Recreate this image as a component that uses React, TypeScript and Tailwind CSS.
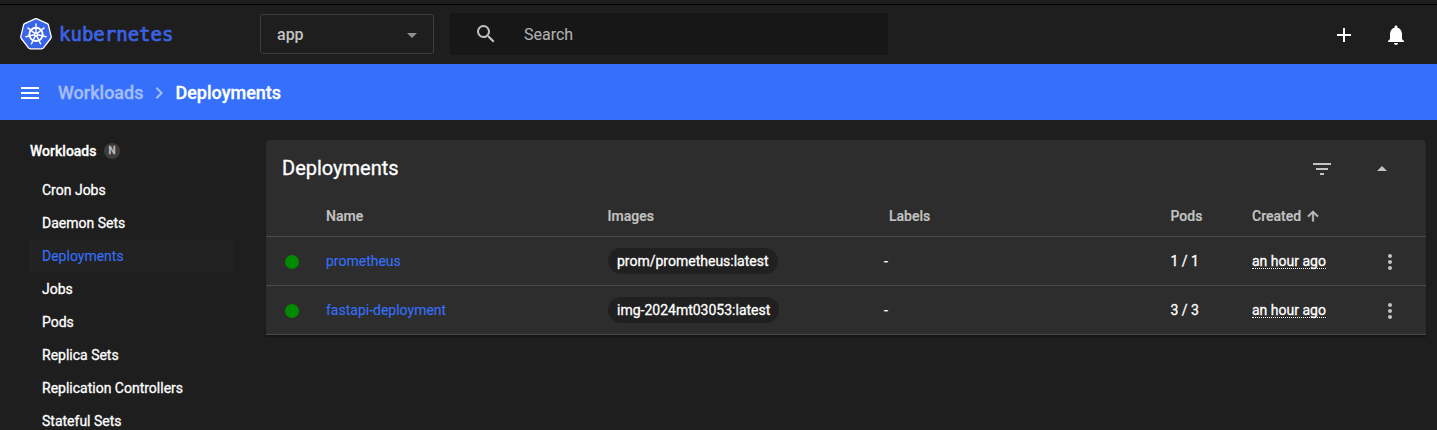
import React from "react";

function Icon({ d, className }: { d: string; className: string }) {
  return (
    <svg viewBox="0 0 24 24" fill="currentColor" className={"shrink-0 " + className}>
      <path d={d} />
    </svg>
  );
}

const ICONS = {
  search:
    "M15.5 14h-.79l-.28-.27A6.471 6.471 0 0 0 16 9.5 6.5 6.5 0 1 0 9.5 16c1.61 0 3.09-.59 4.23-1.57l.27.28v.79l5 4.99L20.49 19l-4.99-5zm-6 0C7.01 14 5 11.99 5 9.5S7.01 5 9.5 5 14 7.01 14 9.5 11.99 14 9.5 14z",
  add: "M19 13h-6v6h-2v-6H5v-2h6V5h2v6h6v2z",
  bell: "M12 22c1.1 0 2-.9 2-2h-4c0 1.1.89 2 2 2zm6-6v-5c0-3.07-1.64-5.64-4.5-6.32V4c0-.83-.67-1.5-1.5-1.5s-1.5.67-1.5 1.5v.68C7.63 5.36 6 7.92 6 11v5l-2 2v1h16v-1l-2-2z",
  menu: "M3 18h18v-2H3v2zm0-5h18v-2H3v2zm0-7v2h18V6H3z",
  chevron: "M10 6L8.59 7.41 13.17 12l-4.58 4.59L10 18l6-6z",
  filter: "M10 18h4v-2h-4v2zM3 6v2h18V6H3zm3 7h12v-2H6v2z",
  down: "M7 10l5 5 5-5z",
  up: "M7 14l5-5 5 5z",
  arrowUp: "M4 12l1.41 1.41L11 7.83V20h2V7.83l5.58 5.59L20 12l-8-8-8 8z",
  more: "M12 8c1.1 0 2-.9 2-2s-.9-2-2-2-2 .9-2 2 .9 2 2 2zm0 2c-1.1 0-2 .9-2 2s.9 2 2 2 2-.9 2-2-.9-2-2-2zm0 6c-1.1 0-2 .9-2 2s.9 2 2 2 2-.9 2-2-.9-2-2-2z",
};

const SPOKES = [0, 1, 2, 3, 4, 5, 6].map((i) => (i * 360) / 7);

function Logo() {
  return (
    <svg viewBox="0 0 32 32" className="size-8 shrink-0">
      <path
        d="M15 .8q1-.5 2 0l10.3 4.9q1 .5 1.2 1.6L31.2 18.6q.2 1-.5 1.9L23.5 29.900q-.7.9-1.800.9H10.300q-1.100 0-1.800-.9L1.300 20.500q-.7-.9-.5-1.900L3.500 7.300q.2-1.100 1.200-1.600z"
        fill="#3a64e8"
        stroke="#fff"
        strokeWidth="1.3"
      />
      <g stroke="#fff" fill="none" strokeLinecap="round">
        <circle cx="16" cy="16.4" r="6.7" strokeWidth="2" />
        {SPOKES.map((a) => (
          <path key={a} d="M16 14.8V6" strokeWidth="1.4" transform={`rotate(${a} 16 16.4)`} />
        ))}
      </g>
      <circle cx="16" cy="16.4" r="2.2" fill="#fff" />
      <circle cx="16" cy="16.4" r=".7" fill="#3a64e8" />
    </svg>
  );
}

const NAV = [
  "Cron Jobs",
  "Daemon Sets",
  "Deployments",
  "Jobs",
  "Pods",
  "Replica Sets",
  "Replication Controllers",
  "Stateful Sets",
];

const ROWS = [
  { name: "prometheus", image: "prom/prometheus:latest", labels: "-", pods: "1 / 1", created: "an hour ago" },
  { name: "fastapi-deployment", image: "img-2024mt03053:latest", labels: "-", pods: "3 / 3", created: "an hour ago" },
];

const GRID = "grid grid-cols-[60px_281.5px_281.5px_281.5px_81.500px_129px_45px] items-center border-b border-[#494949]";

export default function App() {
  return (
    <div className="flex h-[430px] w-[1437px] flex-col overflow-hidden bg-[#1e1e1e] font-[Roboto,sans-serif] text-sm text-white [-webkit-text-stroke:0.3px]">
      <div className="h-[5px] shrink-0 border-b border-black" />
      <header className="flex h-[59px] shrink-0 items-center pb-px pl-5">
        <Logo />
        <span className="ml-[7px] w-[201px] font-['DejaVu_Sans_Mono',monospace] text-[19px] leading-6 text-[#3c62e4] [-webkit-text-stroke:0.7px]">
          kubernetes
        </span>
        <div className="flex h-10 w-[174px] items-center justify-between rounded-[3px] border border-[#3e3e3e] pr-[9px] pl-4 text-base text-[#c3c3c3]">
          <span className="pt-px font-medium [-webkit-text-stroke:0]">app</span>
          <Icon d={ICONS.down} className="mt-[2px] size-6 text-[#8f8f8f]" />
        </div>
        <div className="ml-4 flex h-[42px] w-[438px] items-center rounded-[2px] bg-[#171717] pl-6 text-base text-[#b0b0b0] [-webkit-text-stroke:0.1px]">
          <Icon d={ICONS.search} className="size-6 text-[#c3c3c3]" />
          <span className="ml-[26px] pt-px">Search</span>
        </div>
        <Icon d={ICONS.add} className="mt-[2px] ml-[444px] size-6" />
        <Icon d={ICONS.bell} className="mt-[2px] ml-7 size-6" />
      </header>
      <div className="flex h-14 shrink-0 items-center bg-[#3670fa] pt-px pl-[18px] text-lg leading-6 font-medium">
        <Icon d={ICONS.menu} className="size-6" />
        <span className="mt-px ml-4 text-[#a3bdfd]">Workloads</span>
        <Icon d={ICONS.chevron} className="mx-1 size-6 text-[#a3bdfd]" />
        <span className="mt-px">Deployments</span>
      </div>
      <div className="flex min-h-0 flex-1">
        <nav className="w-[266px] shrink-0 pt-[15px] pl-[29px]">
          <div className="mb-[7px] flex h-8 items-center pl-px font-medium">
            Workloads
            <span className="ml-[7.5px] flex size-4 items-center justify-center rounded-full bg-[#3c3c3c] text-[10px] text-[#c3c3c3]">
              N
            </span>
          </div>
          {NAV.map((item) => (
            <div
              key={item}
              className={
                "mb-px flex h-8 w-[205px] items-center rounded-[3px] pl-[13px] " +
                (item === "Deployments" ? "bg-[#222222] text-[#3670fa] [-webkit-text-stroke:0.1px]" : "")
              }
            >
              {item}
            </div>
          ))}
        </nav>
        <section className="mt-5 h-[195px] w-[1160px] rounded-t-[4px] bg-[#2d2d2d] shadow-[0_2px_2px_rgba(0,0,0,0.35)]">
          <div className="flex h-14 items-center pl-4">
            <h2 className="flex-1 text-xl">Deployments</h2>
            <Icon d={ICONS.filter} className="mt-[2px] size-6 text-[#c3c3c3]" />
            <Icon d={ICONS.up} className="mt-[2px] mr-8 ml-9 size-6 text-[#c3c3c3]" />
          </div>
          <div className={GRID + " h-[41px] font-medium text-[#c3c3c3] [-webkit-text-stroke:0.2px]"}>
            <span />
            <span>Name</span>
            <span>Images</span>
            <span>Labels</span>
            <span>Pods</span>
            <span className="flex items-center">
              Created
              <Icon d={ICONS.arrowUp} className="ml-1 size-4 stroke-current" />
            </span>
            <span />
          </div>
          {ROWS.map((row) => (
            <div key={row.name} className={GRID + " h-[49px]"}>
              <span className="mt-[2px] ml-[19px] size-3.5 rounded-full bg-[#008a00]" />
              <span className="text-[#3670fa] [-webkit-text-stroke:0.1px]">{row.name}</span>
              <span>
                <span className="ml-[0.5px] inline-flex h-[26px] items-center rounded-full bg-[#202020] px-[9px]">
                  {row.image}
                </span>
              </span>
              <span className="-ml-[5px]">{row.labels}</span>
              <span>{row.pods}</span>
              <span>
                <span className="inline-block h-4 border-b border-dotted border-white leading-4">{row.created}</span>
              </span>
              <Icon d={ICONS.more} className="mt-[2px] -ml-[3.5px] size-6 text-[#c3c3c3]" />
            </div>
          ))}
        </section>
      </div>
    </div>
  );
}
